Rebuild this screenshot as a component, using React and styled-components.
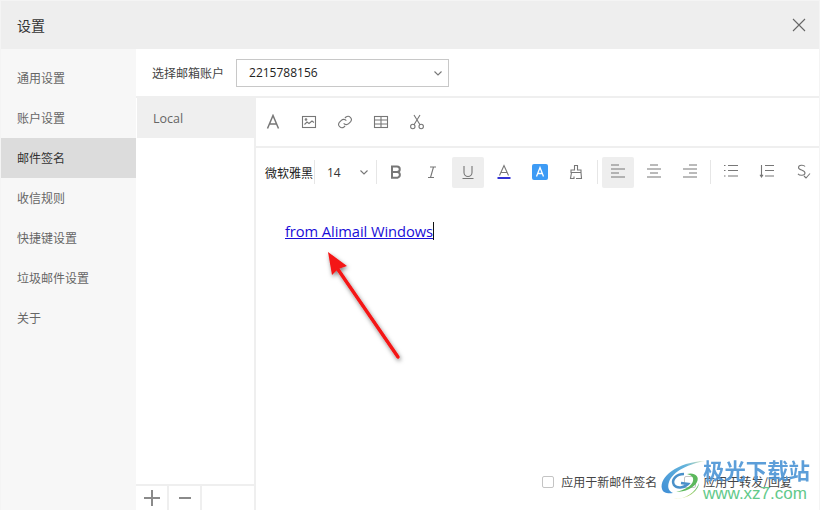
import React from 'react';
import styled, { createGlobalStyle } from 'styled-components';

const Global = createGlobalStyle`
   html, body { margin: 0; padding: 0; background: white; }
   body { font-family: "Open Sans", "Noto Sans CJK SC", sans-serif; }
`

const Window = styled.div`
   position: relative;
   width: 820px;
   height: 510px;
   box-sizing: border-box;
   padding: 1px 1px 0 1px;
   background: #f4f4f4;
   display: flex;
   flex-direction: column;
   overflow: hidden;
`

const TitleBar = styled.div`
   height: 48px;
   flex: none;
   background: #eeeeee;
   display: flex;
   align-items: center;
   justify-content: space-between;
   padding: 0 13px 0 16px;
   font-size: 14px;
   color: #333;
   font-family: "Noto Sans CJK SC", sans-serif;
`

const Close = styled.svg`
   width: 14px;
   height: 14px;
   stroke: #666;
   fill: none;
   stroke-width: 1.1;
`

const Body = styled.div`
   flex: 1;
   display: flex;
   min-height: 0;
`

const Sidebar = styled.div`
   width: 135px;
   flex: none;
   background: #f7f7f7;
   padding-top: 9px;
`

const NavItem = styled.div`
   height: 38px;
   padding: 0 0 2px 16px;
   display: flex;
   align-items: center;
   font-size: 12px;
   font-family: "Noto Sans CJK SC", sans-serif;
   color: ${p => (p.$active ? '#333' : '#666')};
   background: ${p => (p.$active ? '#dcdcdc' : 'transparent')};
`

const Main = styled.div`
   flex: 1;
   background: white;
   display: flex;
   flex-direction: column;
   min-width: 0;
`

const AccountRow = styled.div`
   height: 47px;
   flex: none;
   display: flex;
   align-items: center;
   padding-left: 16px;
   border-bottom: 2px solid #efefef;
   font-size: 12px;
   font-family: "Noto Sans CJK SC", sans-serif;
   color: #444;
`

const Select = styled.div`
   width: 213px;
   height: 28px;
   margin-left: 12px;
   border: 1px solid #c8c8c8;
   display: flex;
   align-items: center;
   justify-content: space-between;
   padding: 0 5px 0 12px;
   box-sizing: border-box;
   font-family: "Open Sans", sans-serif;
   font-size: 12px;
   color: #222;
`

const Columns = styled.div`
   flex: 1;
   display: flex;
   min-height: 0;
`

const SigList = styled.div`
   width: 118px;
   flex: none;
   border-right: 2px solid #efefef;
   display: flex;
   flex-direction: column;
`

const SigItem = styled.div`
   height: 40px;
   margin-left: 1px;
   background: #efefef;
   display: flex;
   align-items: center;
   padding-left: 16px;
   font-size: 12.5px;
   color: #666;
`

const SigSpacer = styled.div`
   flex: 1;
`

const SigFooter = styled.div`
   height: 24px;
   border-top: 2px solid #efefef;
   display: flex;
`

const SigButton = styled.div`
   width: 31px;
   border-right: 2px solid #efefef;
   display: flex;
   align-items: center;
   justify-content: center;
   svg { stroke: #8a8a8a; stroke-width: 2; fill: none; width: 16px; height: 16px; }
`

const Editor = styled.div`
   flex: 1;
   display: flex;
   flex-direction: column;
   min-width: 0;
`

const TopTools = styled.div`
   height: 48px;
   flex: none;
   border-bottom: 2px solid #efefef;
   display: flex;
   align-items: center;
   padding-left: 9px;
   gap: 20px;
`

const FormatTools = styled.div`
   height: 48px;
   flex: none;
   display: flex;
   align-items: center;
   padding-left: 9px;
`

const FontName = styled.span`
   flex: none;
   font-size: 12px;
   color: #222;
   font-family: "Noto Sans CJK SC", sans-serif;
   width: 49px;
`

const Sep = styled.span`
   flex: none;
   width: 1px;
   height: 24px;
   background: #e6e6e6;
   margin: ${p => p.$margin || '0'};
`

const FontSize = styled.div`
   flex: none;
   width: 61px;
   display: flex;
   align-items: center;
   justify-content: space-between;
   padding: 0 7px 0 12px;
   box-sizing: border-box;
   font-size: 12px;
   color: #333;
`

const ToolBtn = styled.div`
   flex: none;
   width: 32px;
   height: 31px;
   margin-right: 4px;
   border-radius: 2px;
   display: flex;
   align-items: center;
   justify-content: center;
   background: ${p => (p.$on ? '#eeeeee' : 'transparent')};
`

const Icon = styled.svg`
   width: ${p => p.$size || 16}px;
   height: ${p => p.$size || 16}px;
   fill: none;
   stroke: #777;
   stroke-width: ${p => p.$weight || 1.1};
   flex: none;
   display: block;
`

const Content = styled.div`
   flex: 1;
   padding: 24px 0 0 29px;
`

const SigText = styled.a`
   font-size: 14.7px;
   line-height: 18px;
   color: #1a0dd8;
   text-decoration: underline;
   border-right: 1px solid #111;
   display: inline-block;
   font-family: "Open Sans", sans-serif;
   letter-spacing: -0.07px;
`

const Options = styled.div`
   height: 37px;
   padding: 8px 27px 0 0;
   flex: none;
   display: flex;
   align-items: flex-start;
   justify-content: flex-end;
   font-size: 12px;
   font-family: "Noto Sans CJK SC", sans-serif;
   color: #444;
`

const Option = styled.label`
   display: flex;
   align-items: center;
   gap: 7px;
   margin-left: 27px;
`

const Box = styled.span`
   width: 10px;
   height: 10px;
   border: 1px solid #c4c4c4;
   border-radius: 2px;
`

const Arrow = styled.svg`
   position: absolute;
   left: 320px;
   top: 245px;
   width: 90px;
   height: 120px;
   overflow: visible;
`

const Watermark = styled.div`
   position: absolute;
   left: 659px;
   top: 457px;
   display: flex;
   flex-direction: column;
   align-items: flex-start;
`

const WatermarkLogo = styled.svg`
   position: absolute;
   left: 659px;
   top: 459px;
   width: 48px;
   height: 42px;
`

const WmTitle = styled.div`
   margin-left: 44px;
   font-family: "Noto Sans CJK SC", sans-serif;
   font-weight: 700;
   font-size: 21.4px;
   line-height: 26px;
   color: #4f96d6;
   white-space: nowrap;
   opacity: 0.92;
`

const WmUrl = styled.div`
   margin: 1px 0 0 44px;
   font-family: "Liberation Sans", sans-serif;
   font-size: 17px;
   line-height: 19px;
   color: #62c98a;
   white-space: nowrap;
`

const Chevron = () => (
  <Icon $size={10} viewBox="0 0 10 10"><path d="M1.5 3.5 L5 7 L8.5 3.5" /></Icon>
)

const aligns = {
  left: 'M1 1h8M1 5h14M1 9h8M1 13h14',
  center: 'M4 1h8M1 5h14M4 9h8M1 13h14',
  right: 'M7 1h8M1 5h14M7 9h8M1 13h14',
}

const App = () => (
  <Window>
    <Global />
    <TitleBar>
      设置
      <Close viewBox="0 0 14 14"><path d="M1 1 L13 13 M13 1 L1 13" /></Close>
    </TitleBar>
    <Body>
      <Sidebar>
        {['通用设置', '账户设置', '邮件签名', '收信规则', '快捷键设置', '垃圾邮件设置', '关于'].map(n => (
          <NavItem key={n} $active={n === '邮件签名'}>{n}</NavItem>
        ))}
      </Sidebar>
      <Main>
        <AccountRow>
          选择邮箱账户
          <Select>2215788156<Chevron /></Select>
        </AccountRow>
        <Columns>
          <SigList>
            <SigItem>Local</SigItem>
            <SigSpacer />
            <SigFooter>
              <SigButton><svg viewBox="0 0 16 16"><path d="M0 8h16M8 0v16" /></svg></SigButton>
              <SigButton><svg viewBox="0 0 16 16"><path d="M2 8h12" /></svg></SigButton>
            </SigFooter>
          </SigList>
          <Editor>
            <TopTools>
              <Icon viewBox="0 0 16 16" $weight={1.5}><path d="M2.500 14.500 L8 1.500 L13.500 14.500 M4.300 10h7.400" /></Icon>
              <Icon viewBox="0 0 16 16"><rect x="1.500" y="2.500" width="13" height="11" /><path d="M3.500 10.500 L6 8 L8 9.500 L11 7 L13 8.500" /><circle cx="5" cy="5.500" r="0.8" /></Icon>
              <Icon viewBox="0 0 24 24" $weight={1.6}><path d="M10 14a5 5 0 0 0 7.500.5l3-3a5 5 0 0 0-7-7l-1.700 1.700" /><path d="M14 10a5 5 0 0 0-7.500-.5l-3 3a5 5 0 0 0 7 7l1.700-1.700" /></Icon>
              <Icon viewBox="0 0 16 16"><rect x="1.500" y="2.500" width="13" height="11" /><path d="M1.500 6h13M1.500 10h13M8 2.500v11" /></Icon>
              <Icon viewBox="0 0 16 16"><circle cx="3.800" cy="12.500" r="2.200" /><circle cx="12.200" cy="12.500" r="2.200" /><path d="M5 10.700 L11 1 M11 10.700 L5 1" /></Icon>
            </TopTools>
            <FormatTools>
              <FontName>微软雅黑</FontName>
              <Sep />
              <FontSize>14<Chevron /></FontSize>
              <Sep $margin="0 3px 0 0" />
              <ToolBtn><Icon viewBox="0 0 16 16" $weight={2}><path d="M4 2.500h5a2.700 2.700 0 0 1 0 5.500H4zM4 8h5.500a2.900 2.900 0 0 1 0 5.700H4z" /></Icon></ToolBtn>
              <ToolBtn><Icon viewBox="0 0 16 16"><path d="M6 3h6M4 13.500h6M9.500 3 L6.500 13.500" /></Icon></ToolBtn>
              <ToolBtn $on><Icon viewBox="0 0 16 16"><path d="M4 2v6.500a4 4 0 0 0 8 0V2M2.500 14.500h11" /></Icon></ToolBtn>
              <ToolBtn>
                <Icon viewBox="0 0 16 16"><path d="M3.500 11.500 L8 1.500 L12.500 11.500 M5 8.500h6" /><path d="M1.500 14h13" stroke="#1a1ad0" strokeWidth="1.800" /></Icon>
              </ToolBtn>
              <ToolBtn>
                <Icon viewBox="0 0 16 16" style={{ stroke: 'white' }}><rect x="0" y="0" width="16" height="16" rx="2" fill="#3d9bf5" stroke="none" /><path d="M4.500 12.500 L8 3.500 L11.500 12.500 M6 9.500h4" strokeWidth="1.300" /></Icon>
              </ToolBtn>
              <ToolBtn><Icon viewBox="0 0 16 16"><path d="M6.500 6V1.500h3V6h3.500v2.500H3V6zM3.500 8.500 L2.500 14.500H6V12.500M8 14.500h5.500L13 8.500" /></Icon></ToolBtn>
              <Sep $margin="0 4px 0 1px" />
              {['left', 'center', 'right'].map(a => (
                <ToolBtn key={a} $on={a === 'left'}>
                  <Icon viewBox="0 0 16 16" $weight={1.2}><path d={aligns[a]} /></Icon>
                </ToolBtn>
              ))}
              <Sep $margin="0 4px 0 0" />
              <ToolBtn><Icon viewBox="0 0 16 16"><path d="M5 1.500h10M5 6.500h10M5 12h10M1 1.500h1.500M1 6.500h1.500M1 12h1.500" /></Icon></ToolBtn>
              <ToolBtn><Icon viewBox="0 0 16 16"><path d="M6 1.500h9M6 6.500h9M6 12h9M2.500 1v12M1 10.800 L2.500 13 L4 10.800" /></Icon></ToolBtn>
              <ToolBtn><Icon viewBox="0 0 16 16"><path d="M10 2.500C9 .8 3.500 .5 3.500 3.500c0 3 6.500 2 6.500 5.500 0 2.800-5.500 2.800-7 .8M9 12 L11 14 L15 9.500" /></Icon></ToolBtn>
            </FormatTools>
            <Content><SigText>from Alimail Windows</SigText></Content>
            <Options>
              <Option><Box />应用于新邮件签名</Option>
              <Option><Box />应用于转发/回复</Option>
            </Options>
          </Editor>
        </Columns>
      </Main>
    </Body>
    <Arrow viewBox="0 0 90 120">
      <defs>
        <filter id="arrowShadow" x="-30%" y="-30%" width="160%" height="160%">
          <feDropShadow dx="1" dy="2" stdDeviation="2" floodColor="#000" floodOpacity="0.5" />
        </filter>
      </defs>
      <g filter="url(#arrowShadow)">
        <path d="M78 112 L17 23" stroke="#f41414" strokeWidth="3.400" strokeLinecap="round" fill="none" />
        <path d="M8 7 L27 21 L18 24 L12 30 Z" fill="#f41414" />
      </g>
    </Arrow>
    <WatermarkLogo viewBox="0 0 48 42">
      <defs>
        <linearGradient id="wmBlue" x1="0" y1="1" x2="1" y2="0">
          <stop offset="0" stopColor="#3f8ed6" />
          <stop offset="0.7" stopColor="#63b3dc" />
          <stop offset="1" stopColor="#d7e6b8" />
        </linearGradient>
        <linearGradient id="wmGreen" x1="0" y1="1" x2="1" y2="0">
          <stop offset="0" stopColor="#e3e05a" />
          <stop offset="1" stopColor="#4fb86a" />
        </linearGradient>
      </defs>
      <path d="M3 30 C0 18 18 3 46 2 C30 5 14 12 10 23 C8 29 10 32 14 34 C9 35 4 34 3 30Z" fill="url(#wmBlue)" />
      <path d="M25 15 C17 15 12 21 15 26 C18 30 25 29 29 25 L22 24" fill="none" stroke="#4a90c9" strokeWidth="2.500" />
      <path d="M28 15 C35 13 41 17 38 23 C35 29 26 33 17 33 C25 31 33 27 34 22 C35 18 32 16 28 15Z" fill="#5cb85c" />
      <path d="M12 40 C26 41 36 34 40 24 C39 33 28 41 12 40Z" fill="url(#wmGreen)" />
    </WatermarkLogo>
    <Watermark>
      <WmTitle>极光下载站</WmTitle>
      <WmUrl>www.xz7.com</WmUrl>
    </Watermark>
  </Window>
)

export default App;
